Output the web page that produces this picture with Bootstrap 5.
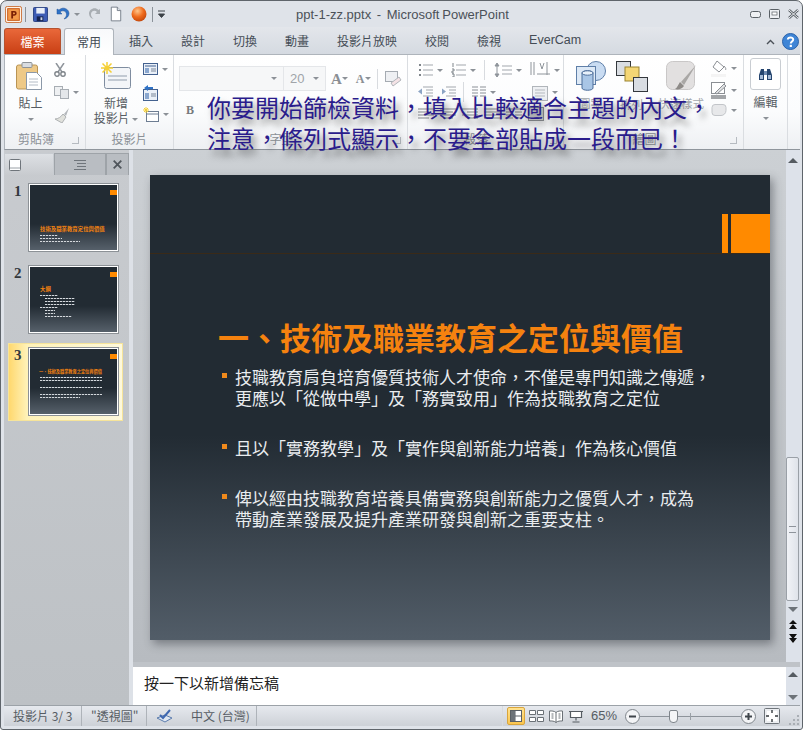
<!DOCTYPE html>
<html lang="zh-Hant">
<head>
<meta charset="UTF-8">
<title>ppt-1-zz.pptx - Microsoft PowerPoint</title>
<link rel="stylesheet" href="https://cdn.jsdelivr.net/npm/bootstrap@5.3.0/dist/css/bootstrap.min.css">
<style>
  body { background: #fff; margin: 0; font-family: "Noto Sans CJK TC", "Liberation Sans", sans-serif; font-size: 12px; color: #444c55; overflow: hidden; }
  svg { display: block; flex: none; }
  .ppt-win { position: relative; width: 803px; height: 730px; border: 1px solid #5f656b; border-radius: 7px 7px 3px 3px; background: #dfe3e9; overflow: hidden; padding: 0 2px 3px 2px; }
  .ppt-title { height: 26px; }
  .qat { padding-left: 2px; }
  .qat-sep { width: 1px; height: 15px; background: #8b9299; }
  .ml3 { margin-left: 3px; } .ml4 { margin-left: 4px; } .ml5 { margin-left: 5px; } .ml8 { margin-left: 8px; } .ml9 { margin-left: 9px; } .mr7 { margin-right: 7px; }
  .doc-name { position: absolute; left: 295px; top: 4px; font-family: "Liberation Sans", sans-serif; font-size: 13px; color: #4b5158; white-space: pre; word-spacing: -.8px; }
  .win-btns { position: absolute; right: 3px; top: 8px; gap: 8px; }
  .ppt-tabs { height: 27px; background: linear-gradient(#e3e6eb, #d5dae1); }
  .tab-file { width: 57px; height: 26px; margin: 1px 0 0 1px; background: linear-gradient(#e9683a, #c93f14); border: 1px solid #b5522f; border-bottom: 0; border-radius: 3px 3px 0 0; color: #fff; font-size: 12px; line-height: 25px; text-align: center; }
  .tab-home { width: 50px; height: 27px; margin: 1px 1px -1px 3px; background: linear-gradient(#f8f9fb, #fff); border: 1px solid #aeb4bb; border-bottom: 0; border-radius: 3px 3px 0 0; line-height: 25px; text-align: center; position: relative; z-index: 1; }
  .tab-item { padding: 0 14px; line-height: 27px; white-space: nowrap; }
  .tab-latin { font-family: "Liberation Sans", sans-serif; font-size: 12.5px; }
  .tab-end { position: absolute; right: 3px; top: 32px; gap: 7px; }
  .ppt-ribbon { height: 96px; background: linear-gradient(#fff 0, #fbfcfd 60%, #eef0f3 100%); border-top: 1px solid #aeb4bb; border-bottom: 1px solid #8f959c; border-left: 1px solid #aeb4bb; margin-left: 1px; color: #5f666d; }
  .rb-group { position: relative; flex: none; height: 94px; border-right: 1px solid #dadde1; }
  .rb-label { position: absolute; left: 0; right: 0; bottom: 1px; text-align: center; color: #8b9096; line-height: 18px; }
  .rb-label.has-launcher { padding-right: 18px; }
  .launcher { position: absolute; right: 6px; bottom: 5px; width: 7px; height: 7px; border: 1px solid #b6bbc1; border-width: 0 1px 1px 0; }
  .g-clip { width: 81px; }
  .g-slides { width: 88px; }
  .g-font { width: 234px; }
  .g-para { width: 156px; }
  .g-draw { width: 180px; }
  .g-edit { width: 44px; }
  .rb-big { line-height: 15px; text-align: center; color: #565c63; }
  .rb-caret { width: 0; height: 0; border: 3px solid transparent; border-top: 3px solid #8c9197; border-bottom: 0; display: inline-block; vertical-align: middle; flex: none; }
  .clip-big { width: 40px; padding: 7px 0 0 11px; }
  .clip-text { margin-top: 5px; }
  .clip-small { padding: 8px 0 0 9px; gap: 9px; }
  .slide-big { width: 56px; padding: 7px 0 0 4px; }
  .slide-text { margin-top: 6px; }
  .slide-small { padding: 8px 0 0 1px; }
  .slide-small2 { margin-top: 10px; }
  .slide-small3 { margin-top: 6px; }
  .font-box { height: 25px; margin: 11px 0 0 5px; }
  .combo { height: 25px; background: #f6f7f8; border: 1px solid #e4e6e9; padding: 0 6px; color: #a0a4a9; font-family: "Liberation Sans", sans-serif; font-size: 13px; line-height: 22px; }
  .combo-name { width: 105px; }
  .combo-size { width: 43px; margin-left: -1px; }
  .grow-a { font-family: "Liberation Serif", serif; font-weight: 700; color: #8b8f94; line-height: 24px; }
  .grow-big { font-size: 15px; margin-left: 5px; }
  .grow-small { font-size: 12px; margin-left: 8px; }
  .tb-sep { width: 1px; height: 20px; background: #d8dbdf; }
  .clear-sep { margin: 0 7px 0 6px; }
  .font-b { position: absolute; left: 12px; top: 46px; font-family: "Liberation Serif", serif; font-weight: 700; font-size: 12px; color: #76797d; }
  .para-row { gap: 4px; height: 22px; }
  .para-row.aligns { gap: 6px; }
  .para-rows { padding: 4px 0 0 10px; }
  .dir-gap { margin-left: 32px; }
  .draw-wrap { padding: 6px 0 0 6px; }
  .draw-label { color: #a3a7ad; font-size: 11.5px; line-height: 15px; white-space: nowrap; margin-top: 5px; }
  .draw-col { width: 41px; }
  .draw-col-wide { width: 58px; }
  .draw-side { position: absolute; right: 6px; top: 5px; gap: 5px; }
  .find-btn { width: 31px; height: 32px; margin: 3px auto 0; background: #fff; border: 1px solid #c9cdd2; border-radius: 3px; }
  .ppt-overlay { position: absolute; left: 206px; top: 90px; z-index: 5; color: #2a1c8c; font-size: 24px; line-height: 31px; white-space: nowrap; text-shadow: 4px 6px 6px rgba(50, 50, 50, .55); }
  .ppt-work { height: 555px; }
  .ppt-side { width: 129px; margin-left: 1px; background: linear-gradient(#c8cbcf, #bdc1c5); border-right: 4px solid #dde1e7; padding-top: 3px; }
  .side-tabs { height: 22px; }
  .side-tab { height: 22px; background: #b9bdc2; border: 1px solid #9ea3a8; border-bottom: 0; }
  .side-tab.on { width: 50px; background: linear-gradient(#dde0e4, #c8cbcf); border-color: #c8ccd1; }
  .side-tab.mid { width: 52px; }
  .side-tab.end { width: 23px; }
  .thumb-row { height: 82px; padding: 8px 0 0 10px; position: relative; }
  .thumb-row.cur { margin: 4px 0 0 4px; width: 115px; height: 78px; padding: 3px 0 0 5px; background: linear-gradient(90deg, #ffd86e 0, #fff2b8 16%, #fdf8dc 100%); border: 1px solid #f6e49a; }
  .thumb-no { width: 14px; font-family: "Liberation Serif", serif; font-weight: 700; font-size: 15px; color: #33383d; line-height: 16px; }
  .thumb { width: 91px; height: 69px; border: 1px solid #8c9196; background: #fff; padding: 1px; }
  .thumb-in { height: 100%; padding: 6px 0 0 10px; background: linear-gradient(#222b33 0, #222b33 60%, #56606a 100%); position: relative; }
  .thumb-mark { position: absolute; right: 0; top: 5px; width: 7px; height: 5px; background: #ff8a00; }
  .thumb-head { font-size: 5.4px; font-weight: 700; color: #f5820f; line-height: 8px; white-space: nowrap; margin-top: 12px; }
  .thumb-head.first { margin-top: 34px; }
  .thumb-head.long { font-size: 4.2px; margin-left: -1px; }
  .tl { height: 1px; margin-top: 2px; background: repeating-linear-gradient(90deg, #d5d9dd 0 2px, #59616a 2px 3px); }
  .tl-gap { margin-top: 6px; }
  .tl-a { width: 18px; } .tl-b { width: 22px; } .tl-c { width: 40px; } .tl-d { width: 62px; } .tl-f { width: 10px; margin-left: 5px; } .tl-g { width: 27px; margin-left: 5px; } .tl-h { width: 30px; margin-left: 5px; }
  .ppt-main { width: 653px; }
  .ppt-canvas { height: 512px; padding: 25px 0 0 17px; background: linear-gradient(#ccd0d4, #b7bbc0); }
  .ppt-slide { width: 620px; height: 465px; padding-top: 39px; background: linear-gradient(#222b33 0, #222b33 56%, #525d68 100%); box-shadow: 3px 4px 9px rgba(40, 44, 50, .45); }
  .slide-mark { height: 40px; gap: 3px; border-bottom: 1px solid #3a2a18; }
  .slide-mark i { display: block; height: 39px; background: #ff8a00; }
  .mark-thin { width: 6px; }
  .mark-wide { width: 39px; }
  .slide-head { margin: 63px 0 9px 68px; font-size: 31px; font-weight: 700; line-height: 40px; color: #f5820f; white-space: nowrap; }
  .slide-para { padding-left: 72px; gap: 8px; font-size: 17px; line-height: 21px; color: #e9ecef; white-space: nowrap; margin-bottom: 29px; }
  .slide-dot { width: 5px; height: 5px; margin-top: 7px; background: #f08a1c; flex: none; }
  .ppt-notes { height: 43px; background: #fff; border-top: 5px solid #bfc3c8; padding: 5px 0 0 11px; font-size: 15px; line-height: 22px; color: #222; }
  .ppt-scroll { width: 14px; background: #dde2ea; position: relative; }
  .sb-up, .sb-down { width: 0; height: 0; border: 5px solid transparent; position: absolute; left: 2px; }
  .sb-up { border-bottom: 5px solid #555b61; border-top: 0; }
  .sb-down { border-top: 5px solid #6d7379; border-bottom: 0; }
  .sb-main-up { top: 8px; }
  .sb-main-down { top: 457px; }
  .sb-note-up { top: 522px; }
  .sb-note-down { top: 545px; }
  .sb-thumb { position: absolute; left: 0; right: 1px; top: 307px; height: 144px; background: linear-gradient(90deg, #f1f3f7, #dfe3ea); border: 1px solid #9aa0a7; border-radius: 2px; }
  .sb-grip { position: absolute; left: 2px; right: 2px; top: 68px; height: 7px; border-top: 1px solid #8e949b; border-bottom: 1px solid #8e949b; }
  .sb-pages { position: absolute; left: 3px; top: 470px; }
  .sb-split { position: absolute; left: 0; right: 0; top: 512px; height: 5px; background: #bfc3c8; }
  .ppt-status { height: 21px; margin-left: 1px; background: linear-gradient(#e6e9ee, #cdd1d7); border-top: 1px solid #9ca2a8; color: #565c63; font-size: 12px; line-height: 20px; }
  .st-cell { border-right: 1px solid #aeb3b9; height: 20px; white-space: nowrap; }
  .st-page { width: 78px; padding-left: 9px; }
  .st-theme { width: 65px; padding-left: 9px; }
  .st-lang { width: 110px; padding-left: 9px; gap: 18px; }
  .st-right { position: absolute; right: 0; top: 0; height: 20px; gap: 4px; padding-right: 20px; }
  .st-grip { position: absolute; right: 1px; bottom: 1px; }
  .view-on { width: 18px; height: 18px; margin: 1px 0; padding: 2px; background: linear-gradient(#ffe28f, #fbc64f); border: 1px solid #d9a53c; border-radius: 2px; }
  .zoom-pct { font-family: "Liberation Sans", sans-serif; font-size: 13px; margin: 0 4px 0 3px; }
  .zoom-track { width: 101px; height: 1px; margin: 0 -4px; background: #8e949b; position: relative; }
  .zoom-tick { position: absolute; left: 50px; top: -3px; width: 1px; height: 7px; background: #9aa0a6; }
  .zoom-knob { position: absolute; left: 29px; top: -6px; width: 9px; height: 13px; background: #f4f5f7; border: 1px solid #7f858b; border-radius: 2px 2px 4px 4px; }
</style>
</head>
<body>
<div class="ppt-win d-flex flex-column">

  <!-- title bar -->
  <div class="ppt-title d-flex align-items-center qat">
    <svg width="17" height="17" viewBox="0 0 19 19"><rect x=".5" y=".5" width="18" height="18" rx="2" fill="#fff3e6" stroke="#c8682a"/><rect x="3" y="3" width="13" height="13" fill="#f39a4a" stroke="#c2500f"/><path d="M7 5.500h3.400a2.600 2.600 0 0 1 0 5.400H9v3H7zM9 7.200v2h1.200a1 1 0 0 0 0-2z" fill="#7a1f05"/></svg>
    <span class="qat-sep ml3 mr7"></span>
    <svg width="15" height="15" viewBox="0 0 16 16"><rect x=".5" y=".5" width="15" height="15" rx="1" fill="#3d5cb4" stroke="#27407f"/><rect x="3.500" y="1" width="9" height="6" fill="#e8eef8"/><rect x="4" y="10" width="7" height="5" fill="#15234f"/><rect x="8" y="11" width="2" height="3" fill="#cdd6ea"/></svg>
    <svg class="ml8" width="14" height="14" viewBox="0 0 14 14"><path d="M1 2v5h5L4 5c2-2 6-1.500 6.500 2 .2 2-1 3.500-2.500 5 3-.5 5-3 5-5.500C13 2 7-1 3 3z" fill="#2f72c6" stroke="#1d5199" stroke-width=".5"/></svg>
    <span class="rb-caret ml4"></span>
    <svg class="ml8" width="14" height="14" viewBox="0 0 14 14"><path d="M12 2v5H7l2-2C7 3 3.500 3.500 3 7c-.2 2 1 3.500 2.500 5-3-.5-4.500-3-4.500-5.500C1 2 7-1 10.500 3z" fill="#a9aeb3"/></svg>
    <svg class="ml8" width="12" height="16" viewBox="0 0 14 17"><path d="M1.500.5h7l4 4v12h-11z" fill="#fff" stroke="#6a7480"/><path d="M8.500.5v4h4" fill="#dfe5ec" stroke="#6a7480"/></svg>
    <svg class="ml9" width="16" height="16" viewBox="0 0 16 16"><defs><radialGradient id="orb" cx=".4" cy=".3" r=".8"><stop offset="0" stop-color="#ffc68a"/><stop offset=".5" stop-color="#ef6a1c"/><stop offset="1" stop-color="#b8400a"/></radialGradient></defs><circle cx="8" cy="8" r="7.500" fill="url(#orb)"/></svg>
    <span class="qat-sep ml5"></span>
    <svg class="ml5" width="7" height="8" viewBox="0 0 7 8"><path d="M0 1h7M.5 4h6L3.500 7.500z" stroke="#3c4248" fill="#3c4248"/></svg>
  </div>
  <div class="doc-name">ppt-1-zz.pptx  -  Microsoft PowerPoint</div>
  <div class="win-btns d-flex align-items-center">
    <svg width="11" height="7" viewBox="0 0 11 7"><rect x=".5" y=".5" width="10" height="6" rx="2" fill="#eef0f3" stroke="#5a6066"/></svg>
    <svg width="11" height="10" viewBox="0 0 11 10"><rect x=".5" y=".5" width="10" height="9" rx="1" fill="#eef0f3" stroke="#5a6066"/><rect x="3" y="3" width="5" height="3" fill="#fff" stroke="#5a6066" stroke-width=".7"/></svg>
    <svg width="11" height="10" viewBox="0 0 11 10"><path d="M1 1l9 8M10 1l-9 8" stroke="#5a6066" stroke-width="2.400"/><path d="M1 1l9 8M10 1l-9 8" stroke="#eef0f3" stroke-width="1"/></svg>
  </div>

  <!-- ribbon tabs -->
  <div class="ppt-tabs d-flex">
    <div class="tab-file">檔案</div>
    <div class="tab-home">常用</div>
    <div class="tab-item">插入</div>
    <div class="tab-item">設計</div>
    <div class="tab-item">切換</div>
    <div class="tab-item">動畫</div>
    <div class="tab-item">投影片放映</div>
    <div class="tab-item">校閱</div>
    <div class="tab-item">檢視</div>
    <div class="tab-item tab-latin">EverCam</div>
  </div>
  <div class="tab-end d-flex align-items-center">
    <svg width="9" height="6" viewBox="0 0 9 6"><path d="M1 5l3.500-3.500L8 5" fill="none" stroke="#4b5158" stroke-width="1.400"/></svg>
    <svg width="17" height="17" viewBox="0 0 17 17"><circle cx="8.500" cy="8.500" r="8" fill="#3f85d6" stroke="#2c62a8"/><path d="M5.800 6.500C6 3.800 11.200 3.600 11.200 6.600c0 2-2.400 2-2.400 4" fill="none" stroke="#fff" stroke-width="2"/><rect x="7.700" y="11.800" width="2.200" height="2.200" fill="#fff"/></svg>
  </div>

  <!-- ribbon -->
  <div class="ppt-ribbon d-flex">
    <div class="rb-group g-clip d-flex">
      <div class="clip-big rb-big">
        <svg width="26" height="28" viewBox="0 0 26 28"><rect x=".5" y="3" width="21" height="24" rx="2" fill="#eec987" stroke="#b99454"/><rect x="6" y=".5" width="10" height="5" rx="1" fill="#d9dce0" stroke="#8d9297"/><path d="M10.500 10.500h10l5 5v12h-15z" fill="#fff" stroke="#8b98a8"/><path d="M13 17h9M13 20h9M13 23h9" stroke="#b4bcc6"/></svg>
        <div class="clip-text">貼上</div>
        <div><span class="rb-caret"></span></div>
      </div>
      <div class="clip-small d-flex flex-column">
        <svg width="12" height="14" viewBox="0 0 12 14"><path d="M2 0l6 9M10 0L4 9" stroke="#8f959b" stroke-width="1.500"/><circle cx="3" cy="11" r="2.200" fill="none" stroke="#7e848a" stroke-width="1.400"/><circle cx="9" cy="11" r="2.200" fill="none" stroke="#7e848a" stroke-width="1.400"/></svg>
        <div class="d-flex align-items-center gap-1">
          <svg width="15" height="13" viewBox="0 0 15 13"><rect x=".5" y=".5" width="8" height="9" fill="#eef0f2" stroke="#a7adb3"/><rect x="6.500" y="3.500" width="8" height="9" fill="#e4e7ea" stroke="#a7adb3"/></svg>
          <span class="rb-caret"></span>
        </div>
        <svg width="16" height="15" viewBox="0 0 16 15"><path d="M15 0l-5 6 2 2z" fill="#b3b7bb"/><path d="M9 6l3 3-4 6-7-4c3 0 6-2 8-5z" fill="#e0e1dc" stroke="#aeb1b3"/></svg>
      </div>
      <div class="rb-label has-launcher">剪貼簿</div>
      <span class="launcher"></span>
    </div>

    <div class="rb-group g-slides d-flex">
      <div class="slide-big rb-big">
        <svg class="mx-auto" width="30" height="27" viewBox="0 0 30 27"><rect x="3.500" y="5.500" width="26" height="21" rx="2" fill="#f3f5f8" stroke="#7f8da0"/><path d="M7 14h19M7 18h19" stroke="#c2c9d2" stroke-width="2"/><path d="M6 0v12M0 6h12M1.500 1.500l9 9M10.500 1.500l-9 9" stroke="#f5cf35" stroke-width="1.500"/></svg>
        <div class="slide-text">新增</div>
        <div class="text-nowrap">投影片 <span class="rb-caret"></span></div>
      </div>
      <div class="slide-small d-flex flex-column">
        <div class="d-flex align-items-center gap-1">
          <svg width="15" height="12" viewBox="0 0 15 12"><rect x=".5" y=".5" width="14" height="11" fill="#eaf0f8" stroke="#43618f"/><path d="M2 3h11" stroke="#43618f"/><rect x="2" y="5" width="4" height="5" fill="#8aa7cf"/><path d="M8 6h5M8 8h5" stroke="#7b8799"/></svg>
          <span class="rb-caret"></span>
        </div>
        <svg class="slide-small2" width="15" height="16" viewBox="0 0 15 16"><rect x=".5" y="4.500" width="14" height="11" fill="#eaf0f8" stroke="#43618f"/><rect x="2" y="8" width="4" height="6" fill="#8aa7cf"/><path d="M8 9h5M8 11h5" stroke="#7b8799"/><path d="M1 3l4-3v2h5v2H5v2z" fill="#2f72c6"/></svg>
        <div class="slide-small3 d-flex align-items-center gap-1">
          <svg width="16" height="15" viewBox="0 0 16 15"><rect x="3.500" y="4.500" width="12" height="10" fill="#fff" stroke="#6d7d92"/><path d="M4 7h11" stroke="#6d7d92"/><path d="M3 0v6M0 3h6M1 1l4 4M5 1L1 5" stroke="#f5cf35"/></svg>
          <span class="rb-caret"></span>
        </div>
      </div>
      <div class="rb-label">投影片</div>
    </div>

    <div class="rb-group g-font">
      <div class="font-box d-flex align-items-center">
        <div class="combo combo-name d-flex justify-content-end align-items-center"><span class="rb-caret"></span></div>
        <div class="combo combo-size d-flex justify-content-between align-items-center">20<span class="rb-caret"></span></div>
        <span class="grow-a grow-big">A</span><span class="rb-caret"></span>
        <span class="grow-a grow-small">A</span><span class="rb-caret"></span>
        <span class="tb-sep clear-sep"></span>
        <svg width="18" height="16" viewBox="0 0 18 16"><rect x=".5" y=".5" width="12" height="10" fill="#eef0f3" stroke="#a5abb2"/><path d="M8 15l8-6-2-3-8 6z" fill="#f4e3e6" stroke="#b2b6bb"/></svg>
      </div>
      <div class="font-b">B</div>
      <div class="rb-label has-launcher">字型</div>
      <span class="launcher"></span>
    </div>

    <div class="rb-group g-para">
      <div class="para-rows d-flex flex-column">
        <div class="para-row d-flex align-items-center">
          <svg width="15" height="14" viewBox="0 0 15 14"><path d="M5 2h10M5 7h10M5 12h10" stroke="#a2a7ad"/><path d="M1 1h2v2H1zM1 6h2v2H1zM1 11h2v2H1z" fill="#7f858b"/></svg><span class="rb-caret"></span>
          <svg class="ml4" width="15" height="14" viewBox="0 0 15 14"><path d="M5 2h10M5 7h10M5 12h10" stroke="#a2a7ad"/><path d="M2 0v4M1 6h2v2H1v2h2M1 11h2v3H1" stroke="#7f858b" fill="none"/></svg><span class="rb-caret"></span>
          <span class="tb-sep ml4"></span>
          <svg class="ml5" width="18" height="14" viewBox="0 0 18 14"><path d="M8 3h10M8 7h10M8 11h10" stroke="#a2a7ad"/><path d="M3 0l2 3H1zM3 14l2-3H1zM3 3v8" stroke="#8e949a" fill="#8e949a"/></svg><span class="rb-caret"></span>
          <svg class="ml4" width="20" height="16" viewBox="0 0 20 16"><path d="M1 0v13M4 0v13M17 0v13M7 12h13" stroke="#8e949a"/><path d="M10 1l2 6 2-6" fill="none" stroke="#8e949a"/></svg><span class="rb-caret"></span>
        </div>
        <div class="para-row d-flex align-items-center">
          <svg width="15" height="13" viewBox="0 0 15 13"><path d="M5 1h10M8 4h7M8 7h7M5 10h10" stroke="#a2a7ad"/><path d="M0 5.500l4-3v6z" fill="#8ca4c4"/></svg>
          <svg class="ml4" width="15" height="13" viewBox="0 0 15 13"><path d="M5 1h10M8 4h7M8 7h7M5 10h10" stroke="#a2a7ad"/><path d="M5 5.500l-4-3v6z" fill="#8ca4c4"/></svg>
          <span class="tb-sep ml3"></span>
          <svg class="ml4" width="14" height="13" viewBox="0 0 14 13"><path d="M0 1h6M8 1h6M0 4h6M8 4h6M0 7h6M8 7h6M0 10h6M8 10h6" stroke="#8b9096"/></svg><span class="rb-caret"></span>
          <svg class="dir-gap" width="16" height="17" viewBox="0 0 16 17"><rect x=".5" y="2.500" width="15" height="14" fill="#eef0f3" stroke="#b0b5ba"/><path d="M3 6h10M3 9h10M3 12h10" stroke="#b4b9be"/></svg><span class="rb-caret"></span>
        </div>
        <div class="para-row aligns d-flex align-items-center">
          <svg width="16" height="12" viewBox="0 0 16 12"><path d="M0 1h16M0 4h11M0 7h16M0 10h11" stroke="#85898e"/></svg>
          <svg width="16" height="12" viewBox="0 0 16 12"><path d="M0 1h16M3 4h10M0 7h16M3 10h10" stroke="#85898e"/></svg>
          <svg width="16" height="12" viewBox="0 0 16 12"><path d="M0 1h16M5 4h11M0 7h16M5 10h11" stroke="#85898e"/></svg>
          <svg width="16" height="12" viewBox="0 0 16 12"><path d="M0 1h16M0 4h16M0 7h16M0 10h16" stroke="#85898e"/></svg>
          <svg width="16" height="12" viewBox="0 0 16 12"><path d="M0 1h7M9 1h7M0 4h7M9 4h7M0 7h7M9 7h7M0 10h7M9 10h7" stroke="#85898e"/></svg>
          <svg width="16" height="14" viewBox="0 0 16 14"><rect x=".5" y=".5" width="15" height="13" fill="#d9dbdd" stroke="#8e9297"/></svg>
        </div>
      </div>
      <div class="rb-label has-launcher">段落</div>
      <span class="launcher"></span>
    </div>

    <div class="rb-group g-draw">
      <div class="draw-wrap d-flex">
        <div class="draw-col text-center">
          <svg class="mx-auto" width="30" height="30" viewBox="0 0 30 30"><circle cx="20" cy="10" r="9.500" fill="#c9dcf2" stroke="#5f7fa8"/><rect x=".5" y="5.500" width="19" height="18" fill="#dde9f6" stroke="#5f7fa8"/><path d="M6 12c0-3 11-3 11 0v15c0 3-11 3-11 0z" fill="#a9c6e6" stroke="#4d6e9a"/><ellipse cx="11.500" cy="12" rx="5.500" ry="2.200" fill="#e8f1fa" stroke="#4d6e9a"/></svg>
          <div class="draw-label">圖案</div>
        </div>
        <div class="draw-col text-center">
          <svg class="mx-auto" width="32" height="31" viewBox="0 0 32 31"><rect x=".5" y=".5" width="14" height="14" fill="#d9dde2" stroke="#34383d"/><rect x="9" y="6" width="14" height="14" fill="#f4d675" stroke="#9a8330"/><rect x="17.500" y="16.500" width="14" height="14" fill="#d9dde2" stroke="#34383d"/></svg>
          <div class="draw-label">排列</div>
        </div>
        <div class="draw-col-wide text-center">
          <svg class="mx-auto" width="30" height="30" viewBox="0 0 30 30"><rect x=".5" y=".5" width="28" height="28" rx="6" fill="#e2e0e0" stroke="#c9c7c7"/><path d="M30 4L15 21l3 3z" fill="#a9a7a5"/><path d="M14 21l4 4c-2 3-6 4-9 3 2-1 3-4 5-7z" fill="#8e8b88"/></svg>
          <div class="draw-label">快速樣式</div>
        </div>
      </div>
      <div class="draw-side d-flex flex-column">
        <div class="d-flex align-items-center gap-1">
          <svg width="16" height="17" viewBox="0 0 16 17"><path d="M6 1l7 6-5 5-6-5z" fill="#fff" stroke="#8b8f94"/><path d="M13 6c2 2 2 3 1.500 4" stroke="#8b8f94" fill="none"/><rect y="14" width="15" height="3" fill="#f4f4f4"/></svg><span class="rb-caret"></span>
        </div>
        <div class="d-flex align-items-center gap-1">
          <svg width="16" height="17" viewBox="0 0 16 17"><rect x=".5" y=".5" width="13" height="11" fill="#fff" stroke="#8b8f94"/><path d="M4 11l9-9 2 2-9 8z" fill="#dfe1e3" stroke="#8b8f94"/><rect y="13" width="15" height="4" fill="#a2a5a8"/></svg><span class="rb-caret"></span>
        </div>
        <div class="d-flex align-items-center gap-1">
          <svg width="16" height="13" viewBox="0 0 16 13"><path d="M4 .5h8a3 3 0 0 1 3 3v3a5 5 0 0 1-5 5H4a3 3 0 0 1-3-3v-5a3 3 0 0 1 3-3z" fill="#e7e8ea" stroke="#c2c5c9"/></svg><span class="rb-caret"></span>
        </div>
      </div>
      <div class="rb-label has-launcher">繪圖</div>
      <span class="launcher"></span>
    </div>

    <div class="rb-group g-edit rb-big">
      <div class="find-btn d-flex align-items-center justify-content-center">
        <svg width="15" height="14" viewBox="0 0 15 14"><path d="M1 8l2-6h3v11H1zM14 8l-2-6H9v11h5z" fill="#24446e"/><rect x="6" y="4" width="3" height="4" fill="#6f8bb0"/><rect x="2" y="8" width="3" height="4" fill="#a6bbd6"/><rect x="10" y="8" width="3" height="4" fill="#a6bbd6"/></svg>
      </div>
      <div class="mt-1">編輯</div>
      <div><span class="rb-caret"></span></div>
    </div>
  </div>

  <div class="ppt-overlay">你要開始篩檢資料&#65292;填入比較適合主題的內文&#65292;<br>注意&#65292;條列式顯示&#65292;不要全部貼成一段而已&#65281;</div>

  <!-- workspace -->
  <div class="ppt-work d-flex">
    <div class="ppt-side">
      <div class="side-tabs d-flex">
        <div class="side-tab on d-flex align-items-center ps-1">
          <svg width="12" height="12" viewBox="0 0 12 12"><rect x=".5" y=".5" width="11" height="11" rx="1" fill="#fff" stroke="#6f757b"/><path d="M1 9h10" stroke="#9aa0a6"/></svg>
        </div>
        <div class="side-tab mid d-flex align-items-center justify-content-center">
          <svg width="12" height="10" viewBox="0 0 12 10"><path d="M0 .5h12M3 3.500h9M3 6.500h9M0 9.500h12" stroke="#6f757b"/></svg>
        </div>
        <div class="side-tab end d-flex align-items-center justify-content-center">
          <svg width="9" height="9" viewBox="0 0 9 9"><path d="M.7.7l7.600 7.600M8.300.7L.7 8.300" stroke="#50565c" stroke-width="1.800"/></svg>
        </div>
      </div>
      <div class="thumb-row d-flex">
        <div class="thumb-no">1</div>
        <div class="thumb"><div class="thumb-in">
          <span class="thumb-mark"></span>
          <div class="thumb-head first">技術及職業教育定位與價值</div>
          <div class="tl tl-a"></div><div class="tl tl-b"></div><div class="tl tl-c"></div>
        </div></div>
      </div>
      <div class="thumb-row d-flex">
        <div class="thumb-no">2</div>
        <div class="thumb"><div class="thumb-in">
          <span class="thumb-mark"></span>
          <div class="thumb-head">大綱</div>
          <div class="tl tl-a"></div><div class="tl tl-h"></div><div class="tl tl-h"></div><div class="tl tl-h"></div><div class="tl tl-a"></div><div class="tl tl-f"></div><div class="tl tl-f"></div><div class="tl tl-g"></div>
        </div></div>
      </div>
      <div class="thumb-row cur d-flex">
        <div class="thumb-no">3</div>
        <div class="thumb"><div class="thumb-in">
          <span class="thumb-mark"></span>
          <div class="thumb-head long">一、技術及職業教育之定位與價值</div>
          <div class="tl tl-d"></div><div class="tl tl-d"></div><div class="tl tl-d tl-gap"></div><div class="tl tl-d tl-gap"></div><div class="tl tl-c"></div>
        </div></div>
      </div>
    </div>

    <div class="ppt-main">
      <div class="ppt-canvas">
        <div class="ppt-slide">
          <div class="slide-mark d-flex justify-content-end"><i class="mark-thin"></i><i class="mark-wide"></i></div>
          <div class="slide-head">一、技術及職業教育之定位與價值</div>
          <div class="slide-para d-flex"><span class="slide-dot"></span><div>技職教育肩負培育優質技術人才使命&#65292;不僅是專門知識之傳遞&#65292;<br>更應以「從做中學」及「務實致用」作為技職教育之定位</div></div>
          <div class="slide-para d-flex"><span class="slide-dot"></span><div>且以「實務教學」及「實作與創新能力培養」作為核心價值</div></div>
          <div class="slide-para d-flex"><span class="slide-dot"></span><div>俾以經由技職教育培養具備實務與創新能力之優質人才&#65292;成為<br>帶動產業發展及提升產業研發與創新之重要支柱。</div></div>
        </div>
      </div>
      <div class="ppt-notes">按一下以新增備忘稿</div>
    </div>

    <div class="ppt-scroll">
      <span class="sb-up sb-main-up"></span>
      <div class="sb-thumb"><div class="sb-grip"></div></div>
      <span class="sb-down sb-main-down"></span>
      <svg class="sb-pages" width="8" height="23" viewBox="0 0 8 23"><path d="M4 0l4 4H0zM4 4l4 5H0zM0 14h8l-4 5zM0 18h8l-4 5z" fill="#111"/></svg>
      <div class="sb-split"></div>
      <span class="sb-up sb-note-up"></span>
      <span class="sb-down sb-note-down"></span>
    </div>
  </div>

  <!-- status bar -->
  <div class="ppt-status d-flex position-relative">
    <div class="st-cell st-page">投影片 3/ 3</div>
    <div class="st-cell st-theme">"透視圖"</div>
    <div class="st-cell st-lang d-flex align-items-center">
      <svg width="17" height="14" viewBox="0 0 17 14"><path d="M1 9l8-3 7 3-7 4z" fill="#dfe7f2" stroke="#5b7cad"/><path d="M4 6l3 3 7-8" fill="none" stroke="#3f68b0" stroke-width="2"/></svg>
      <span>中文 (台灣)</span>
    </div>
    <div class="st-right d-flex align-items-center">
      <span class="tb-sep"></span>
      <div class="view-on"><svg width="12" height="12" viewBox="0 0 12 12"><rect x=".5" y=".5" width="11" height="11" fill="#fff" stroke="#5a5f64"/><path d="M5 1v10M5 6h6" stroke="#5a5f64"/><rect x="1" y="1" width="4" height="10" fill="#6d7378"/></svg></div>
      <svg width="15" height="12" viewBox="0 0 15 12"><path d="M.5.5h6v4h-6zM8.500.5h6v4h-6zM.5 7.500h6v4h-6zM8.500 7.500h6v4h-6z" fill="#fff" stroke="#6a7076"/></svg>
      <svg width="16" height="13" viewBox="0 0 15 13"><path d="M7.500 2.500C6 1 3 .8 1 1v10c2-.2 5 0 6.500 1.500C9 11 12 10.800 14 11V1c-2-.2-5 0-6.500 1.500zM7.500 2.500v10M3 4h2M3 6h2M3 8h2M10 4h2M10 6h2M10 8h2" fill="#fff" stroke="#6a7076"/></svg>
      <svg width="16" height="13" viewBox="0 0 15 13"><path d="M.5 1.500h14M2 1.500v6h11v-6M7.500 7.500v3M4 12h7" fill="#fff" stroke="#565c62" stroke-width="1.200"/></svg>
      <span class="zoom-pct">65%</span>
      <svg width="15" height="15" viewBox="0 0 15 15"><circle cx="7.500" cy="7.500" r="7" fill="#f3f4f6" stroke="#7f858b"/><path d="M4 7.500h7" stroke="#3f454b" stroke-width="2"/></svg>
      <div class="zoom-track"><span class="zoom-tick"></span><span class="zoom-knob"></span></div>
      <svg width="15" height="15" viewBox="0 0 15 15"><circle cx="7.500" cy="7.500" r="7" fill="#f3f4f6" stroke="#7f858b"/><path d="M4 7.500h7M7.500 4v7" stroke="#3f454b" stroke-width="2"/></svg>
      <svg class="ml4" width="16" height="16" viewBox="0 0 16 16"><rect x=".5" y=".5" width="15" height="15" rx="1" fill="#eceef1" stroke="#6f757b"/><rect x="3" y="3" width="10" height="10" fill="#fff"/><path d="M8 2v3M8 11v3M2 8h3M11 8h3" stroke="#33383d" stroke-width="1.400"/></svg>
    </div>
    <svg class="st-grip" width="10" height="10" viewBox="0 0 10 10"><path d="M8 0h2v2H8zM4 4h2v2H4zM8 4h2v2H8zM0 8h2v2H0zM4 8h2v2H4zM8 8h2v2H8z" fill="#a9aeb4"/></svg>
  </div>
</div>
</body>
</html>
